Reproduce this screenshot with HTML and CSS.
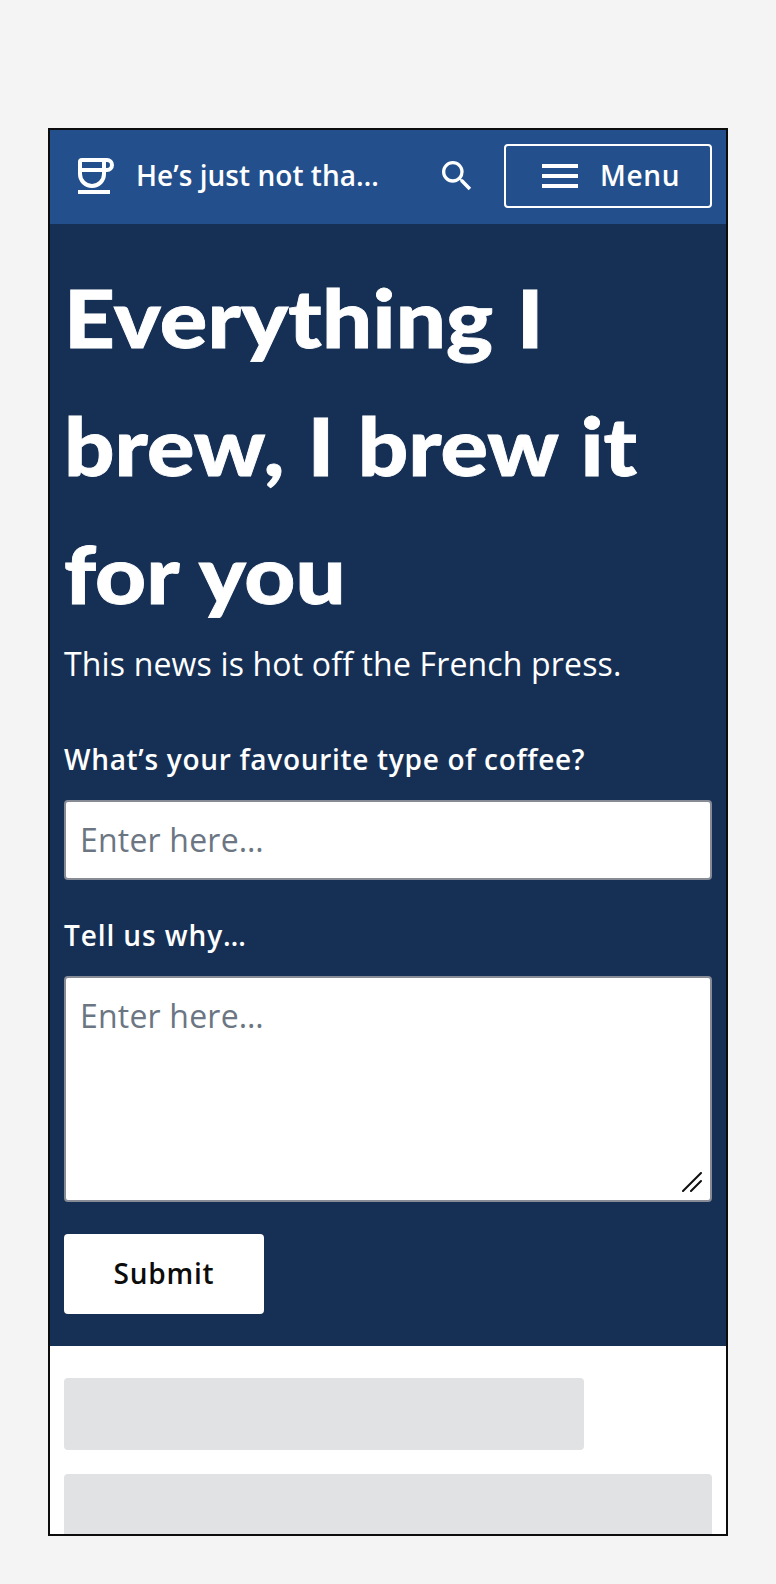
FILE: index.html
```html
<!DOCTYPE html>
<html lang="en">
<head>
<meta charset="utf-8">
<title>He’s just not that into brew</title>
<link rel="stylesheet" href="styles.css">
</head>
<body>
<div class="frame">
  <header class="topbar">
    <svg class="logo" width="48" height="48" viewBox="0 0 48 48" fill="none" stroke="#fff" stroke-width="4">
      <path d="M32 8V22A12 12 0 0 1 8 22V10Q8 8 10 8H35A5 5 0 0 1 35 18H8"/>
      <path d="M6 40H38"/>
    </svg>
    <span class="brand">He’s just not tha…</span>
    <svg class="search" width="40" height="40" viewBox="0 0 24 24" fill="#fff">
      <path d="M15.5 14h-.79l-.28-.27A6.471 6.471 0 0 0 16 9.5 6.5 6.5 0 1 0 9.5 16c1.61 0 3.09-.59 4.23-1.57l.27.28v.79l5 4.99L20.49 19l-4.99-5zm-6 0C7.01 14 5 11.99 5 9.5S7.01 5 9.5 5 14 7.01 14 9.5 11.99 14 9.5 14z"/>
    </svg>
    <button class="menu" type="button">
      <svg width="36" height="24" viewBox="0 0 36 24" fill="#fff"><path d="M0 0h36v4H0zM0 10h36v4H0zM0 20h36v4H0z"/></svg>
      <span>Menu</span>
    </button>
  </header>
  <section class="hero">
    <h1 class="title"><span class="line first">Everything I</span> <span class="line">brew, I brew it</span> <span class="line">for you</span></h1>
    <p class="tagline">This news is hot off the French press.</p>
    <form class="form">
      <label class="label" for="type">What’s your favourite type of coffee?</label>
      <input class="field single" id="type" type="text" placeholder="Enter here…">
      <label class="label wide" for="why">Tell us why…</label>
      <div class="area">
        <textarea class="field tall" id="why" placeholder="Enter here…"></textarea>
        <svg class="grip" width="20" height="20" viewBox="0 0 20 20" stroke="#0f0f10" stroke-width="2" stroke-linecap="round"><path d="M1 19L19 1M9 19L19 9"/></svg>
      </div>
      <button class="submit" type="button">Submit</button>
    </form>
  </section>
  <div class="skeleton">
    <div class="bar short"></div>
    <div class="bar"></div>
  </div>
</div>
</body>
</html>
```
FILE: styles.css
```css
* { box-sizing: border-box; }
body {
  margin: 0;
  padding: 128px 48px 48px;
  background: #f4f4f4;
  color: #fff;
  font-family: "Open Sans", "Noto Sans", sans-serif;
}
.frame {
  width: 680px;
  height: 1408px;
  border: 2px solid #0c0c0c;
  background: #fff;
  overflow: hidden;
}
.topbar {
  display: flex;
  align-items: center;
  height: 94px;
  padding: 0 14px 2px 22px;
  background: #23508c;
}
.logo { flex: none; }
.brand {
  flex: 1;
  margin-left: 16px;
  padding-bottom: 2px;
  font-size: 28px;
  font-weight: 600;
  line-height: 40px;
  letter-spacing: 0.04px;
  white-space: nowrap;
}
.search { flex: none; margin-right: 27px; }
.menu {
  display: flex;
  align-items: center;
  width: 208px;
  height: 64px;
  padding: 0 0 0 36px;
  border: 2px solid #fff;
  border-radius: 4px;
  background: none;
  color: #fff;
  font: 600 28px/40px "Open Sans", "Noto Sans", sans-serif;
  letter-spacing: 0.7px;
}
.menu span { margin-left: 22px; padding-bottom: 2px; }
.hero {
  height: 1122px;
  padding: 29px 14px 32px;
  background: #163055;
}
.title {
  margin: 0 0 3px;
  font-family: Lato, sans-serif;
  font-size: 80px;
  font-weight: 900;
  line-height: 128px;
  word-spacing: 2px;
  white-space: nowrap;
  transform: scaleX(1.107);
  transform-origin: left;
  -webkit-text-stroke: 0.8px #fff;
}
.line { display: block; }
.first { letter-spacing: 0.2px; }
.tagline { margin: 0; font-size: 32px; line-height: 48px; letter-spacing: 0.16px; }
.form { display: flex; flex-direction: column; padding-top: 50px; }
.label {
  margin-bottom: 20px;
  font-size: 28px;
  font-weight: 600;
  line-height: 42px;
  letter-spacing: 0.7px;
}
.wide { letter-spacing: 0.9px; }
.field {
  display: block;
  width: 100%;
  height: 80px;
  margin: 0 0 34px;
  padding: 0 14px;
  border: 2px solid #868b95;
  border-radius: 4px;
  background: #fff;
  font: 400 32px/48px "Open Sans", "Noto Sans", sans-serif;
  letter-spacing: 0.2px;
  resize: none;
}
.field::placeholder { color: #6c7683; opacity: 1; }
.single { padding-bottom: 2px; }
.area { position: relative; margin-bottom: 32px; }
.tall { height: 226px; margin: 0; padding: 14px; }
.grip { position: absolute; right: 10px; bottom: 10px; }
.submit {
  width: 200px;
  height: 80px;
  padding: 0 0 2px;
  border: 0;
  border-radius: 4px;
  background: #fff;
  color: #0c0c0c;
  font: 600 28px/40px "Open Sans", "Noto Sans", sans-serif;
  letter-spacing: 0.8px;
}
.skeleton { display: grid; gap: 24px; padding: 32px 14px; }
.bar { height: 72px; border-radius: 4px; background: #e1e2e4; }
.short { width: 520px; }
```
